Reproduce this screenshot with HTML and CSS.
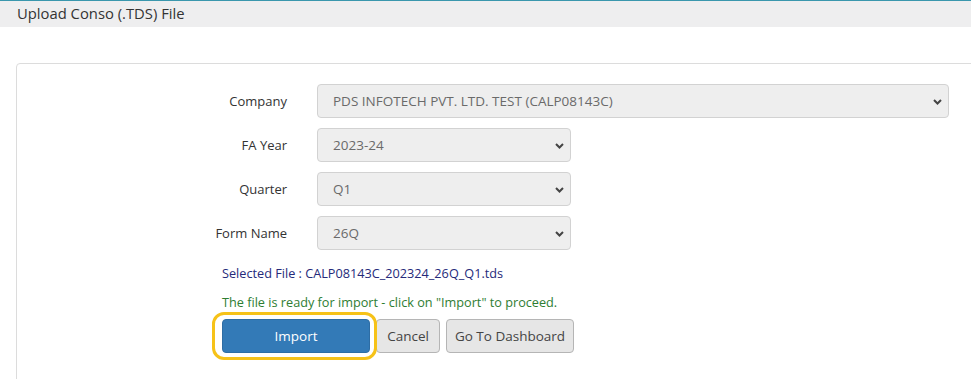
FILE: index.html
```html
<!DOCTYPE html>
<html lang="en">
<head>
<meta charset="utf-8">
<title>Upload Conso (.TDS) File</title>
<link rel="stylesheet" href="styles.css">
</head>
<body>
<div class="page-header">Upload Conso (.TDS) File</div>
<div class="card">
  <form class="form">
    <div class="row">
      <label class="label">Company</label>
      <div class="select-wrap wide">
        <select class="select"><option>PDS INFOTECH PVT. LTD. TEST (CALP08143C)</option></select>
        <svg class="chev" width="9" height="6" viewBox="0 0 9 6"><path d="M1 1 L4.5 4.5 L8 1" fill="none" stroke="#444" stroke-width="2"/></svg>
      </div>
    </div>
    <div class="row">
      <label class="label">FA Year</label>
      <div class="select-wrap narrow">
        <select class="select"><option>2023-24</option></select>
        <svg class="chev" width="9" height="6" viewBox="0 0 9 6"><path d="M1 1 L4.5 4.5 L8 1" fill="none" stroke="#444" stroke-width="2"/></svg>
      </div>
    </div>
    <div class="row">
      <label class="label">Quarter</label>
      <div class="select-wrap narrow">
        <select class="select"><option>Q1</option></select>
        <svg class="chev" width="9" height="6" viewBox="0 0 9 6"><path d="M1 1 L4.5 4.5 L8 1" fill="none" stroke="#444" stroke-width="2"/></svg>
      </div>
    </div>
    <div class="row">
      <label class="label">Form Name</label>
      <div class="select-wrap narrow">
        <select class="select"><option>26Q</option></select>
        <svg class="chev" width="9" height="6" viewBox="0 0 9 6"><path d="M1 1 L4.5 4.5 L8 1" fill="none" stroke="#444" stroke-width="2"/></svg>
      </div>
    </div>
    <div class="info">
      <p class="selected">Selected File : CALP08143C_202324_26Q_Q1.tds</p>
      <p class="ready">The file is ready for import - click on "Import" to proceed.</p>
      <div class="actions">
        <button type="button" class="btn btn-primary highlight">Import</button>
        <button type="button" class="btn btn-default cancel">Cancel</button>
        <button type="button" class="btn btn-default dash">Go To Dashboard</button>
      </div>
    </div>
  </form>
</div>
</body>
</html>
```

FILE: styles.css
```css
html, body {
  margin: 0;
  padding: 0;
  background: #fff;
  overflow: hidden;
  height: 379px;
  font-family: "Open Sans", "Noto Sans", sans-serif;
  color: #333;
}

.page-header {
  height: 26px;
  border-top: 1px solid #3a97ad;
  background: #eeeeef;
  padding-left: 17px;
  font-size: 14.8px;
  line-height: 25px;
  color: #333;
}

.card {
  margin: 36px -30px 0 16px;
  border: 1px solid #dcdcdc;
  border-radius: 4px;
  padding: 20px 0 0 0;
  height: 300px;
}

.form {
  display: flex;
  flex-direction: column;
}

.row {
  display: flex;
  align-items: center;
  height: 34px;
  margin-bottom: 10px;
}

.label {
  width: 270px;
  text-align: right;
  font-size: 13px;
  color: #333;
  margin-right: 30px;
}

.select-wrap {
  position: relative;
  height: 34px;
}

.select-wrap.wide { width: 632px; }
.select-wrap.narrow { width: 254px; }

.select {
  appearance: none;
  -webkit-appearance: none;
  width: 100%;
  height: 34px;
  box-sizing: border-box;
  border: 1px solid #d2d2d2;
  border-radius: 4px;
  background: #eeeeee;
  color: #6a6a6a;
  font-family: inherit;
  font-size: 13.5px;
  padding: 0 12px 0 15px;
}

.chev {
  position: absolute;
  right: 7px;
  top: 15px;
}

.info {
  padding-left: 205px;
}

.selected {
  margin: 4px 0 0 0;
  font-size: 12.7px;
  line-height: 18px;
  color: #252a7a;
}

.ready {
  margin: 11px 0 0 0;
  font-size: 12.7px;
  line-height: 18px;
  color: #2e7d32;
}

.actions {
  display: flex;
  gap: 6px;
  margin-top: 8px;
}

.btn {
  height: 34px;
  box-sizing: border-box;
  border-radius: 4px;
  font-family: inherit;
  font-size: 13.5px;
  padding: 0 6px;
  white-space: nowrap;
  cursor: pointer;
}

.btn-primary {
  width: 148px;
  background: #337ab7;
  border: 1px solid #2e6da4;
  color: #fff;
}

.btn-default {
  background: #e6e6e6;
  border: 1px solid #b5b5b5;
  color: #444;
}

.cancel { width: 64px; }
.dash { width: 128px; }

.highlight {
  position: relative;
}

.highlight::after {
  content: "";
  position: absolute;
  top: -8px;
  bottom: -8px;
  left: -11px;
  right: -8px;
  border: 3px solid #f6c218;
  border-radius: 12px;
}
```
